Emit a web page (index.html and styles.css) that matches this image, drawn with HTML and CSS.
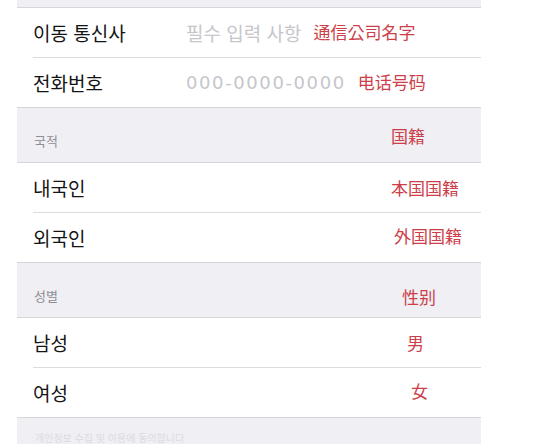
FILE: index.html
```html
<!DOCTYPE html>
<html lang="ko">
<head>
  <meta charset="UTF-8">
  <meta name="viewport" content="width=device-width, initial-scale=1.0">
  <title>정보 입력</title>
  <link rel="stylesheet" href="styles.css">
</head>
<body>
  <div class="panel">
    <div class="group">
      <div class="row">
        <div class="row-inner">
          <span class="label">이동 통신사</span>
          <span class="hint">필수 입력 사항</span>
          <span class="note note-inline">通信公司名字</span>
        </div>
      </div>
      <div class="row">
        <div class="row-inner">
          <span class="label">전화번호</span>
          <span class="hint hint-num">000-0000-0000</span>
          <span class="note note-inline">电话号码</span>
        </div>
      </div>
    </div>

    <div class="section-head">
      <span class="section-title">국적</span>
      <span class="note note-nation">国籍</span>
    </div>
    <div class="group">
      <div class="row">
        <div class="row-inner">
          <span class="label">내국인</span>
          <span class="note note-local">本国国籍</span>
        </div>
      </div>
      <div class="row">
        <div class="row-inner">
          <span class="label">외국인</span>
          <span class="note note-foreign">外国国籍</span>
        </div>
      </div>
    </div>

    <div class="section-head">
      <span class="section-title">성별</span>
      <span class="note note-gender">性别</span>
    </div>
    <div class="group">
      <div class="row">
        <div class="row-inner">
          <span class="label">남성</span>
          <span class="note note-male">男</span>
        </div>
      </div>
      <div class="row">
        <div class="row-inner">
          <span class="label">여성</span>
          <span class="note note-female">女</span>
        </div>
      </div>
    </div>

    <div class="footer">
      <span class="footer-text">개인정보 수집 및 이용에 동의합니다</span>
    </div>
  </div>
</body>
</html>
```

FILE: styles.css
```css
html, body {
  margin: 0;
  height: 444px;
  overflow: hidden;
}
body {
  background-color: #fff;
  font-family: "Noto Sans CJK KR", "Noto Sans", sans-serif;
}
.panel {
  margin-left: 17px;
  width: 464px;
  padding-top: 7px;
  background-color: #efeff4;
  height: 437px;
}
.group {
  background-color: #fff;
  border-top: 1px solid #d6d6da;
  border-bottom: 1px solid #d6d6da;
}
.row {
  padding-left: 16px;
}
.row-inner {
  height: 49px;
  display: flex;
  align-items: center;
  border-bottom: 1px solid #dcdce0;
}
.row:last-child .row-inner {
  border-bottom: none;
}
.label {
  font-size: 19px;
  color: #141414;
  width: 153px;
  flex: none;
}
.hint {
  font-size: 19px;
  color: #c6c6cb;
}
.hint-num {
  font-family: "DejaVu Sans", sans-serif;
  font-size: 18px;
  letter-spacing: 1.6px;
}
.note {
  font-family: "Noto Sans CJK SC", sans-serif;
  font-size: 17px;
  color: #cc3f4a;
  margin-left: auto;
}
.note-inline {
  margin-left: 12px;
  margin-top: -3px;
}
.note-nation {
  margin-right: 56px;
  margin-bottom: 2px;
}
.note-local {
  margin-right: 22px;
}
.note-foreign {
  margin-right: 19px;
  margin-top: -5px;
}
.note-gender {
  margin-right: 45px;
  margin-bottom: -4px;
}
.note-male {
  margin-right: 57px;
}
.note-female {
  margin-right: 53px;
  margin-top: -4px;
}
.section-head {
  height: 54px;
  display: flex;
  align-items: flex-end;
  padding: 0 0 12px 17px;
  box-sizing: border-box;
}
.section-title {
  font-size: 13px;
  color: #8e8e93;
}
.footer {
  padding: 11px 0 0 18px;
  line-height: 12px;
}
.footer-text {
  font-size: 10px;
  color: #dcdce0;
}
```
